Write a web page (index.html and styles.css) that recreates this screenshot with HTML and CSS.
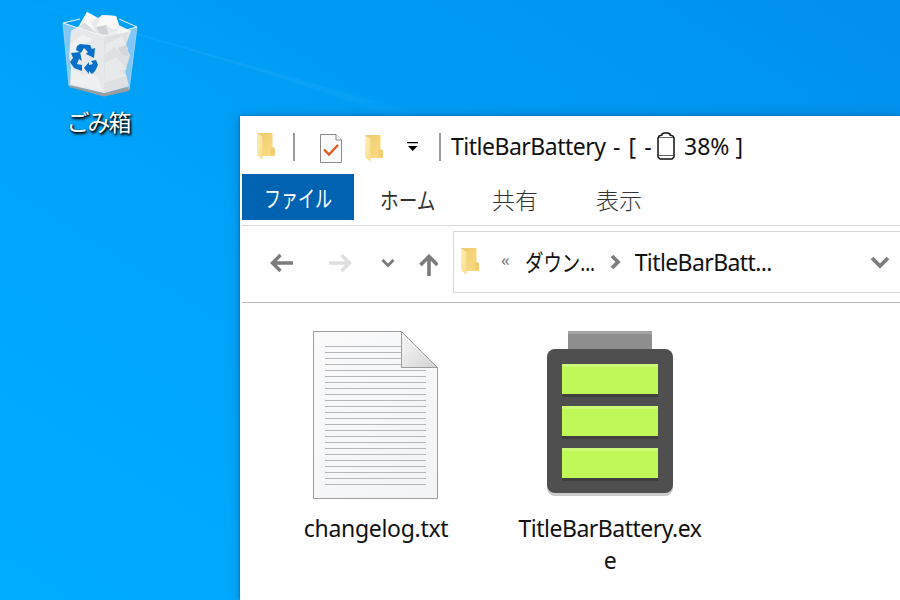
FILE: index.html
```html
<!DOCTYPE html>
<html lang="ja">
<head>
  <meta charset="UTF-8" />
  <meta name="viewport" content="width=device-width, initial-scale=1.0"/>
  <title>TitleBarBattery</title>
  <link rel="stylesheet" href="styles.css">
</head>
<body>

  <!-- shared shapes -->
  <svg width="0" height="0" class="defs">
    <defs>
      <linearGradient id="fold-back" x1="0" x2="1" y1="0" y2="1">
        <stop offset="0" stop-color="#edcb70"/>
        <stop offset="1" stop-color="#ffdc82"/>
      </linearGradient>
      <linearGradient id="fold-front" x1="0" x2="1" y1="0" y2="1">
        <stop offset="0" stop-color="#fff0b9"/>
        <stop offset="1" stop-color="#f8dc88"/>
      </linearGradient>
    </defs>
    <symbol id="folder" viewBox="0 0 18 27">
      <path d="M0 0H15.5V14L18 15.5V23H5L0 20Z" fill="url(#fold-back)"/>
      <path d="M13.5 15V22.5H18V15.5L15.5 14Z" fill="#f1ce73"/>
      <path d="M0 0.5L5.5 4V26.5L0 22.5Z" fill="url(#fold-front)"/>
    </symbol>
  </svg>

  <svg class="beam" viewBox="0 0 900 600">
    <defs>
      <linearGradient id="ray" x1="0" x2="1">
        <stop offset="0" stop-color="#3cb8ff" stop-opacity="0"/>
        <stop offset="0.5" stop-color="#3cb8ff" stop-opacity="0.22"/>
        <stop offset="1" stop-color="#3cb8ff" stop-opacity="0.05"/>
      </linearGradient>
    </defs>
    <path d="M0 -6L420 114L390 116Q240 60 0 -2Z" fill="url(#ray)"/>
  </svg>

  <div class="trash">
    <svg width="76" height="86" viewBox="0 0 76 86">
      <path d="M1 12L41 25L75 16L67 79L42 85L7 75Z" fill="#a9d6f3" opacity="0.75"/>
      <path d="M7 74L42 82L67 76V80L42 85.5L7 76Z" fill="#999ea3"/>
      <path d="M9 20L17 15L25 1L36 7L40 4L54 5L57 14L69 20L63 36L68 44L63 60L66 75L42 82L8 74L9 56L7 46Z" fill="#e6e8eb"/>
      <path d="M17 15L25 1L36 7L29 11L34 21Z" fill="#f8f8f8"/>
      <path d="M17 15L23 12L35 22L26 21Z" fill="#dadddf"/>
      <path d="M34 16L40 4L54 5L57 14L52 19L44 14L47 25L37 22Z" fill="#f9f9f9"/>
      <path d="M34 16L44 14L47 25L37 22Z" fill="#cfd1d4"/>
      <path d="M55 15L69 20L56 23Z" fill="#f5f5f5"/>
      <path d="M42 27L66 21L63 36L68 44L63 60L67 75L42 82Z" fill="#dfe0e3"/>
      <path d="M44 33L60 25L66 38L62 44L52 36L42 44Z" fill="#e9eaec"/>
      <path d="M56 37L64 34L67 45L60 44Z" fill="#d4d6da"/>
      <path d="M43 52L54 46L65 58L57 60L65 65L42 72Z" fill="#e8e9eb"/>
      <path d="M8 33L20 24L31 28L22 34L30 40L18 43L24 50L10 47Z" fill="#eff1f3"/>
      <path d="M9 57L20 63L35 65L41 80L9 73Z" fill="#eff0f2"/>
      <path d="M1 12L41 25L75 16M1 12L18 8M57 8L75 16" fill="none" stroke="#f0f8fd" stroke-width="1"/>
      <path d="M1 12L7 75M75 16L67 79" fill="none" stroke="#a8d8f5" stroke-width="0.8"/>
      <g fill="#0870c8">
        <path d="M15 35L18 33L28 34L30 38L33 37L32 47L24 43L26 41L22 37L19 42L14 39Z"/>
        <path d="M9 42L18 41L20 50L17 48L15 53L20 54V60L12 57L8 51L11 47Z"/>
        <path d="M22 57L27 51V54L31 53L29 50L34 49L36 54L33 60L30 63L27 60V63Z"/>
      </g>
    </svg>
    <span class="trash-label">ごみ箱</span>
  </div>

  <div class="window">
    <div class="title-bar">
      <svg class="folder app-folder" width="18" height="27"><use href="#folder"/></svg>
      <span class="separator"></span>
      <svg class="check-icon" width="22" height="29" viewBox="0 0 22 29">
        <path d="M0.5 0.5H16L21.5 6V28.5H0.5Z" fill="#fafafa" stroke="#8b8b8b"/>
        <path d="M16 0.5V6H21.5" fill="#fff" stroke="#8b8b8b"/>
        <path d="M4 15.5L9 20.5L18 11" fill="none" stroke="#dc5b1e" stroke-width="2.4"/>
      </svg>
      <svg class="folder new-folder" width="18" height="27"><use href="#folder"/></svg>
      <svg class="customize" width="11" height="10" viewBox="0 0 11 10">
        <path d="M0 0H11V1.3H0ZM1 4H10.5L5.7 9Z" fill="#000"/>
      </svg>
      <span class="separator"></span>
      <div class="title">
        <span class="title-name">TitleBarBattery</span>
        <span class="title-state">- [ -</span>
        <svg width="18" height="28" viewBox="0 0 18 28">
          <path d="M1 6L2 4L5 3V2L7 1H11L13 2V3L16 4L17 6V25L15 27H3L1 25Z" fill="#fff" stroke="#111" stroke-width="1.5"/>
          <path d="M2 5.5H16M2 23.5H16" stroke="#555" stroke-width="0.9"/>
        </svg>
        <span class="title-level">38% ]</span>
      </div>
    </div>

    <div class="tabs">
      <div class="tab file-tab"><span class="file-text">ファイル</span></div>
      <div class="tab home-tab"><span class="home-text">ホーム</span></div>
      <div class="tab share-tab">共有</div>
      <div class="tab view-tab">表示</div>
    </div>

    <div class="nav-bar">
      <svg class="nav-icons" width="168" height="24" viewBox="0 0 168 24" fill="none">
        <path d="M23 11H3M10.5 3L2.5 11L10.5 19" stroke="#7b7b7b" stroke-width="3.4"/>
        <path d="M59 11H79M71.5 3L79.5 11L71.5 19" stroke="#dedede" stroke-width="3.4"/>
        <path d="M112.5 8L118 13.5L123.5 8" stroke="#7b7b7b" stroke-width="3"/>
        <path d="M159 24V5M150.5 13L159 4.5L167.5 13" stroke="#7b7b7b" stroke-width="3.6"/>
      </svg>
      <div class="address">
        <svg class="folder" width="18" height="27"><use href="#folder"/></svg>
        <span class="more">«</span>
        <div class="crumb-down"><span class="kana">ダウン...</span></div>
        <svg class="crumb-arrow" width="11" height="16" viewBox="0 0 11 16">
          <path d="M2 2L8 8L2 14" fill="none" stroke="#7d7d7d" stroke-width="3.8"/>
        </svg>
        <span class="crumb-here">TitleBarBatt...</span>
        <svg class="address-arrow" width="20" height="14" viewBox="0 0 20 14">
          <path d="M2 3L10 11L18 3" fill="none" stroke="#7d7d7d" stroke-width="3.8"/>
        </svg>
      </div>
    </div>

    <div class="files">
      <div class="file">
        <svg width="126" height="168" viewBox="0 0 126 168">
          <defs>
            <linearGradient id="paper" x1="0" x2="1" y1="0" y2="1">
              <stop offset="0" stop-color="#fafafb"/>
              <stop offset="1" stop-color="#f2f4f6"/>
            </linearGradient>
            <linearGradient id="curl" x1="0" x2="1" y1="0.2" y2="1">
              <stop offset="0" stop-color="#f5f5f5"/>
              <stop offset="1" stop-color="#d2d2d2"/>
            </linearGradient>
            <pattern id="rules" width="102" height="6" patternUnits="userSpaceOnUse" x="12" y="15">
              <rect width="102" height="1" fill="#b5b7ba"/>
            </pattern>
          </defs>
          <path d="M0.5 0.5H88L124.5 37V167.5H0.5Z" fill="url(#paper)" stroke="#9b9c9e"/>
          <path d="M12 15H88V39H113V154H12Z" fill="url(#rules)"/>
          <path d="M88.5 0.5L124.5 36.5H88.5Z" fill="url(#curl)" stroke="#9b9c9e"/>
        </svg>
        <span class="file-name text-name">changelog.txt</span>
      </div>
      <div class="file">
        <svg width="126" height="168" viewBox="0 0 126 168">
          <rect x="21" width="84" height="18" fill="#8e8e8e"/>
          <rect x="21" width="84" height="3" fill="#a5a5a5"/>
          <rect y="21" width="126" height="144" rx="8" fill="#cacaca"/>
          <rect y="18" width="126" height="144" rx="8" fill="#4f4f4f"/>
          <path d="M15 33H111V66H15ZM15 75H111V108H15ZM15 117H111V150H15Z" fill="#3f3f3f"/>
          <path d="M15 33H111V63H15ZM15 75H111V105H15ZM15 117H111V147H15Z" fill="#c0f957"/>
          <path d="M15 33H111V36H15ZM15 75H111V78H15ZM15 117H111V120H15Z" fill="#ccfa78"/>
        </svg>
        <span class="file-name">TitleBarBattery.exe</span>
      </div>
    </div>
  </div>

</body>
</html>
```

FILE: styles.css
```css
* {
  box-sizing: border-box;
}

body {
  margin: 0;
  height: 600px;
  overflow: hidden;
  background: linear-gradient(32deg, #00adff 0%, #00a5fa 40%, #009cf4 65%, #0090eb 100%);
  font-family: "Noto Sans", "Noto Sans CJK JP", sans-serif;
  font-size: 23px;
  color: #111;
}

svg {
  display: block;
  flex: none;
}

.defs {
  position: absolute;
}

.beam {
  position: absolute;
  top: 0;
  left: 0;
  width: 900px;
  height: 600px;
}

/* desktop icon */
.trash {
  position: absolute;
  top: 11px;
  left: 40px;
  width: 120px;
  display: flex;
  flex-direction: column;
  align-items: center;
}

.trash-label {
  margin: 7px 4px 0 0;
  line-height: 34px;
  font-family: "Noto Sans CJK JP", sans-serif;
  font-size: 23px;
  letter-spacing: -2px;
  color: #fff;
  text-shadow: 1px 1px 2px #000, 1px 2px 3px #000;
}

/* explorer window */
.window {
  position: absolute;
  top: 116px;
  left: 240px;
  width: 660px;
  height: 484px;
  padding-left: 2px;
  background: #fff;
  box-shadow: 0 0 3px rgba(0, 50, 100, 0.6), 0 2px 14px rgba(0, 50, 100, 0.25);
}

.title-bar {
  display: flex;
  align-items: center;
  height: 58px;
  padding: 4px 0 0 15px;
}

.separator {
  width: 2px;
  height: 28px;
  background: #9b9b9b;
}

.app-folder {
  margin-right: 18px;
  margin-top: -2px;
}

.check-icon {
  margin-left: 25px;
  margin-top: 2px;
}

.new-folder {
  margin: 3px 24px 0 23px;
}

.customize {
  margin-right: 21px;
}

.title {
  display: flex;
  align-items: center;
  margin: -2px 0 0 10px;
  line-height: 32px;
  white-space: nowrap;
}

.title-name {
  width: 162px;
  letter-spacing: -0.5px;
}

.title-state {
  width: 44px;
  letter-spacing: 1.1px;
}

.title-level {
  margin-left: 9px;
}

.tabs {
  display: flex;
  height: 52px;
  border-bottom: 1px solid #d9d9d9;
  font-family: "Noto Sans CJK JP", sans-serif;
  font-weight: 300;
  color: #333;
}

.tab {
  height: 46px;
  line-height: 51px;
  white-space: nowrap;
}

.file-tab {
  width: 112px;
  line-height: 47px;
  padding-left: 22px;
  background: #0063b1;
  color: #fff;
}

.file-text,
.home-text,
.kana {
  display: inline-block;
  font-weight: 400;
  transform-origin: left center;
}

.file-text {
  transform: scaleX(0.74);
}

.home-tab {
  width: 111px;
  padding-left: 26px;
}

.home-text {
  transform: scaleX(0.81);
}

.share-tab {
  width: 104px;
  padding-left: 27px;
}

.view-tab {
  padding-left: 27px;
}

.nav-bar {
  display: flex;
  align-items: center;
  height: 77px;
  padding: 0 0 5px 28px;
  border-bottom: 1px solid #bbb;
}

.nav-icons {
  margin-top: 4px;
}

.address {
  display: flex;
  align-items: center;
  width: 447px;
  height: 62px;
  margin-left: 15px;
  padding-left: 7px;
  border: 1px solid #d9d9d9;
  border-right: 0;
}

.more {
  margin: -5px 0 0 22px;
  font-size: 17px;
  color: #777;
}

.crumb-down {
  width: 71px;
  margin: -2px 0 0 15px;
}

.kana {
  transform: scaleX(0.8);
  white-space: nowrap;
}

.crumb-arrow {
  margin-left: 14px;
}

.crumb-here {
  width: 235px;
  margin-left: 14px;
  letter-spacing: -0.6px;
}

.files {
  display: flex;
  padding: 28px 0 0 17px;
}

.file {
  display: flex;
  flex-direction: column;
  align-items: center;
  width: 234px;
}

.file-name {
  width: 190px;
  margin-top: 13px;
  line-height: 32px;
  letter-spacing: -0.5px;
  text-align: center;
  word-break: break-all;
}

.text-name {
  letter-spacing: -0.3px;
}
```
